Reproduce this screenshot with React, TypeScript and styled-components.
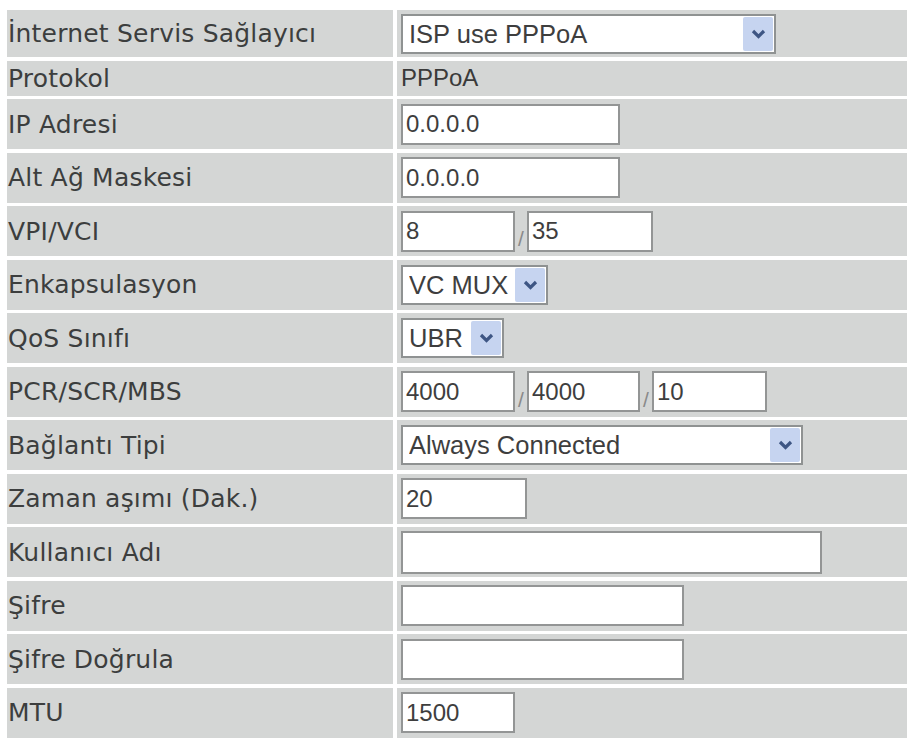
import React from 'react';
import styled, { createGlobalStyle } from 'styled-components';

const GlobalStyle = createGlobalStyle`
  html, body {
    margin: 0;
    padding: 0;
    background: #ffffff;
  }
`;

const Page = styled.div`
  padding: 10px 2px 0 7px;
  height: 740px;
  box-sizing: border-box;
  overflow: hidden;
`;

const Table = styled.div`
  display: grid;
  grid-template-columns: 386px 510px;
  grid-template-rows: 47px 35px;
  grid-auto-rows: 50px;
  column-gap: 4px;
  row-gap: 3.5px;
`;

const Cell = styled.div`
  background: #d4d6d5;
  display: flex;
  align-items: center;
  box-sizing: border-box;
`;

const Label = styled(Cell)`
  padding-left: 1px;
  font-family: 'DejaVu Sans', Verdana, sans-serif;
  font-size: 25px;
  letter-spacing: 0.2px;
  color: #3c3e3e;
`;

const Value = styled(Cell)`
  padding-left: 4px;
  font-family: 'Liberation Sans', Arial, sans-serif;
  font-size: 24px;
  color: #3a3a3a;
`;

const TextBox = styled.input<{ $w: number; $h?: number }>`
  width: ${(p) => p.$w}px;
  height: ${(p) => p.$h ?? 41}px;
  box-sizing: border-box;
  border: 2px solid #939595;
  background: #fff;
  padding: 0 0 0 3px;
  margin: 0;
  font-family: 'Liberation Sans', Arial, sans-serif;
  font-size: 24px;
  color: #3e3e3e;
  outline: none;
`;

const Slash = styled.span`
  width: 12px;
  align-self: stretch;
  display: flex;
  align-items: flex-end;
  justify-content: center;
  padding-bottom: 7px;
  box-sizing: border-box;
  font-size: 21px;
  line-height: 1;
  color: #8a8a8a;
`;

const SelectBox = styled.div<{ $w: number }>`
  width: ${(p) => p.$w}px;
  height: 40px;
  box-sizing: border-box;
  border: 2px solid #8f9292;
  background: #fff;
  display: flex;
  align-items: stretch;
`;

const NativeSelect = styled.select`
  flex: 1;
  min-width: 0;
  appearance: none;
  border: none;
  background: transparent;
  padding: 0 0 0 6px;
  margin: 0;
  font-family: 'Liberation Sans', Arial, sans-serif;
  font-size: 25.5px;
  color: #3e3e3e;
  outline: none;
`;

const ArrowBox = styled.span`
  width: 30px;
  margin: 1px;
  background: #c6d4f0;
  border-radius: 2px;
  display: flex;
  align-items: center;
  justify-content: center;
`;

const Chevron = () => (
  <svg width="15" height="10" viewBox="0 0 15 10">
    <path d="M2 2 L7.5 7.5 L13 2" fill="none" stroke="#3e5684" strokeWidth="3.2" />
  </svg>
);

const Dropdown = ({ w, value }: { w: number; value: string }) => (
  <SelectBox $w={w}>
    <NativeSelect defaultValue={value}>
      <option>{value}</option>
    </NativeSelect>
    <ArrowBox>
      <Chevron />
    </ArrowBox>
  </SelectBox>
);

type Row = { label: string; content: React.ReactNode };

const rows: Row[] = [
  { label: 'İnternet Servis Sağlayıcı', content: <Dropdown w={375} value="ISP use PPPoA" /> },
  { label: 'Protokol', content: 'PPPoA' },
  { label: 'IP Adresi', content: <TextBox $w={219} defaultValue="0.0.0.0" /> },
  { label: 'Alt Ağ Maskesi', content: <TextBox $w={219} defaultValue="0.0.0.0" /> },
  {
    label: 'VPI/VCI',
    content: (
      <>
        <TextBox $w={114} defaultValue="8" />
        <Slash>/</Slash>
        <TextBox $w={126} defaultValue="35" />
      </>
    ),
  },
  { label: 'Enkapsulasyon', content: <Dropdown w={147} value="VC MUX" /> },
  { label: 'QoS Sınıfı', content: <Dropdown w={103} value="UBR" /> },
  {
    label: 'PCR/SCR/MBS',
    content: (
      <>
        <TextBox $w={114} defaultValue="4000" />
        <Slash>/</Slash>
        <TextBox $w={113} defaultValue="4000" />
        <Slash>/</Slash>
        <TextBox $w={115} defaultValue="10" />
      </>
    ),
  },
  { label: 'Bağlantı Tipi', content: <Dropdown w={402} value="Always Connected" /> },
  { label: 'Zaman aşımı (Dak.)', content: <TextBox $w={126} defaultValue="20" /> },
  { label: 'Kullanıcı Adı', content: <TextBox $w={421} $h={43} defaultValue="" /> },
  { label: 'Şifre', content: <TextBox $w={283} type="password" defaultValue="" /> },
  { label: 'Şifre Doğrula', content: <TextBox $w={283} type="password" defaultValue="" /> },
  { label: 'MTU', content: <TextBox $w={114} defaultValue="1500" /> },
];

export default function App() {
  return (
    <>
      <GlobalStyle />
      <Page>
        <Table>
          {rows.map((row) => (
            <React.Fragment key={row.label}>
              <Label>{row.label}</Label>
              <Value>{row.content}</Value>
            </React.Fragment>
          ))}
        </Table>
      </Page>
    </>
  );
}
